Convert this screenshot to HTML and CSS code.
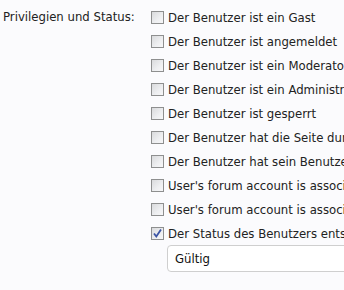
FILE: index.html
```html
<!DOCTYPE html>
<html>
<head>
    <title>Benutzer bearbeiten</title>
    <link rel="stylesheet" href="styles.css">
</head>
<body>
<div class="field">
    <div class="field-label">Privilegien und Status:</div>
    <div class="options">
        <label class="option"><span class="box"></span>Der Benutzer ist ein Gast</label>
        <label class="option"><span class="box"></span>Der Benutzer ist angemeldet</label>
        <label class="option"><span class="box"></span>Der Benutzer ist ein Moderator</label>
        <label class="option"><span class="box"></span>Der Benutzer ist ein Administrator</label>
        <label class="option"><span class="box"></span>Der Benutzer ist gesperrt</label>
        <label class="option"><span class="box"></span>Der Benutzer hat die Seite durch einen Link besucht</label>
        <label class="option"><span class="box"></span>Der Benutzer hat sein Benutzerkonto aktiviert</label>
        <label class="option"><span class="box"></span>User's forum account is associated with a Facebook account</label>
        <label class="option"><span class="box"></span>User's forum account is associated with a Twitter account</label>
        <label class="option"><span class="box checked"><svg width="11" height="11" viewBox="0 0 11 11"><path d="M2 5.5 L4.3 8.5 L9 1.5" fill="none" stroke="#3b54a4" stroke-width="1.8"/></svg></span>Der Status des Benutzers entspricht</label>
        <div class="select">Gültig</div>
    </div>
</div>
</body>
</html>
```

FILE: styles.css
```css
html, body {
    margin:0;
    padding:0;
    background:#fbfbfd;
    overflow:hidden;
}

body {
    font-family: "DejaVu Sans Condensed", "DejaVu Sans", sans-serif;
    font-stretch: condensed;
    font-size:13px;
    color:#222222;
}

.field {
    display:flex;
    padding:7px 0 0 3px;
}

.field-label {
    width:148px;
    flex:none;
    line-height:20px;
    white-space:nowrap;
}

.options {
    display:flex;
    flex-direction:column;
    gap:4px;
}

.option {
    display:flex;
    align-items:center;
    height:20px;
    white-space:nowrap;
}

.box {
    width:11px;
    height:11px;
    flex:none;
    margin-right:4px;
    border:1px solid #8e8f8f;
    background:linear-gradient(135deg, #d9dadc 0%, #eeeff1 60%, #f7f7f8 100%);
    display:flex;
    align-items:center;
    justify-content:center;
}

.select {
    margin:-2px 0 0 16px;
    width:260px;
    height:25px;
    border:1px solid #cfcfcf;
    border-radius:4px;
    background:#ffffff;
    color:#111111;
    padding-left:7px;
    line-height:25px;
}
```
